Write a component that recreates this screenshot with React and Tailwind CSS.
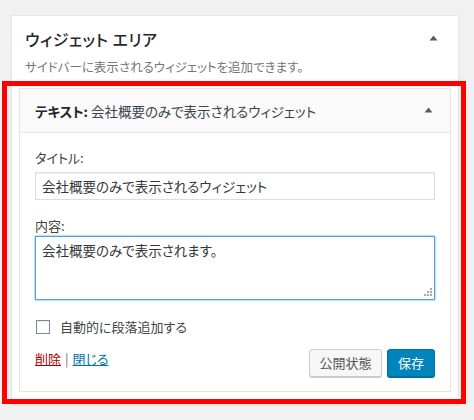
import React from "react";

const font = "font-['Noto_Sans_CJK_JP','Noto_Sans',sans-serif] [font-feature-settings:'palt']";

function Tri() {
  return (
    <svg width="9" height="6" viewBox="0 0 9 6" className="block">
      <path d="M0.5 5.5 L4.5 0.5 L8.5 5.5 Z" fill="#555d66" />
    </svg>
  );
}

export default function App() {
  return (
    <div className={`relative w-[474px] h-[420px] bg-[#f1f1f1] overflow-hidden ${font}`}>
      <div className="pt-[15px] pl-[11px]">
        <div className="w-[448px] h-[390px] bg-white border border-[#e5e5e5] shadow-[0_1px_1px_rgba(0,0,0,0.04)]">
          <div className="flex items-start justify-between pl-[13px] pr-[20px] pt-[13px]">
            <div className="text-[16px] leading-[20px] text-[#23282d] font-medium tracking-[0.5px]">ウィジェット エリア</div>
            <div className="pt-[6px]"><Tri /></div>
          </div>
          <div className="pl-[13px] pt-[9px] text-[12.5px] leading-[18px] text-[#72777c]">
            サイドバーに表示されるウィジェットを追加できます。
          </div>
          <div className="ml-[7px] mt-[12px] w-[432px] border border-[#e5e5e5] bg-white">
            <div className="h-[44px] bg-[#fafafa] border-b border-[#e5e5e5] flex items-center justify-between pl-[15px] pr-[17px]">
              <div className="text-[13.5px] leading-[18px] text-[#23282d]">
                <span className="font-bold">テキスト:</span> <span className="text-[#3c434a]">会社概要のみで表示されるウィジェット</span>
              </div>
              <div className="-mt-[2px]"><Tri /></div>
            </div>
            <div className="px-[15px] pt-[16px] pb-[14px]">
              <div className="text-[13px] leading-[18px] text-[#444]">タイトル:</div>
              <input
                readOnly
                value="会社概要のみで表示されるウィジェット"
                className={`mt-[5px] block w-[400px] h-[28px] border border-[#ddd] px-[6px] text-[13.5px] text-[#32373c] shadow-[inset_0_1px_2px_rgba(0,0,0,0.07)] outline-none ${font}`}
              />
              <div className="mt-[17px] text-[13px] leading-[18px] text-[#444]">内容:</div>
              <div className="relative mt-[1px] w-[400px] h-[64px]">
                <textarea
                  readOnly
                  value="会社概要のみで表示されます。"
                  className={`block w-[400px] h-[64px] resize-none border border-[#5b9dd9] shadow-[0_0_2px_rgba(30,140,190,0.8)] px-[6px] py-[3px] text-[13.5px] leading-[20px] text-[#32373c] outline-none ${font}`}
                />
                <svg width="8" height="8" viewBox="0 0 8 8" className="absolute right-[3px] bottom-[4px]">
                  <rect x="6" y="0" width="2" height="2" fill="#aaa" />
                  <rect x="3" y="3" width="2" height="2" fill="#aaa" />
                  <rect x="6" y="3" width="2" height="2" fill="#aaa" />
                  <rect x="0" y="6" width="2" height="2" fill="#aaa" />
                  <rect x="3" y="6" width="2" height="2" fill="#aaa" />
                  <rect x="6" y="6" width="2" height="2" fill="#aaa" />
                </svg>
              </div>
              <div className="mt-[18px] flex items-center">
                <span className="ml-[1px] w-[14px] h-[14px] border border-[#7e8993] bg-white shadow-[inset_0_1px_2px_rgba(0,0,0,0.1)]" />
                <span className="ml-[10px] text-[13px] leading-[18px] text-[#444]">自動的に段落追加する</span>
              </div>
              <div className="mt-[13px] flex items-start justify-between">
                <div className="text-[13px] leading-[18px] pt-[1px]">
                  <a className="text-[#a00] underline">削除</a>
                  <span className="text-[#72777c] mx-[4px]">|</span>
                  <a className="text-[#0073aa] underline">閉じる</a>
                </div>
                <div className="flex gap-[5px]">
                  <button className={`h-[28px] w-[73px] rounded-[3px] border border-[#ccc] bg-[#f7f7f7] text-[13px] text-[#555] shadow-[0_1px_0_#ccc] ${font}`}>公開状態</button>
                  <button className={`h-[28px] w-[48px] rounded-[3px] border border-[#0073aa] bg-[#0085ba] text-[13px] text-white shadow-[0_1px_0_#006799] ${font}`}>保存</button>
                </div>
              </div>
            </div>
          </div>
        </div>
      </div>
      <div className="absolute left-[2px] top-[81px] w-[464px] h-[323px] border-[5px] border-[#ff0000] pointer-events-none" />
    </div>
  );
}
